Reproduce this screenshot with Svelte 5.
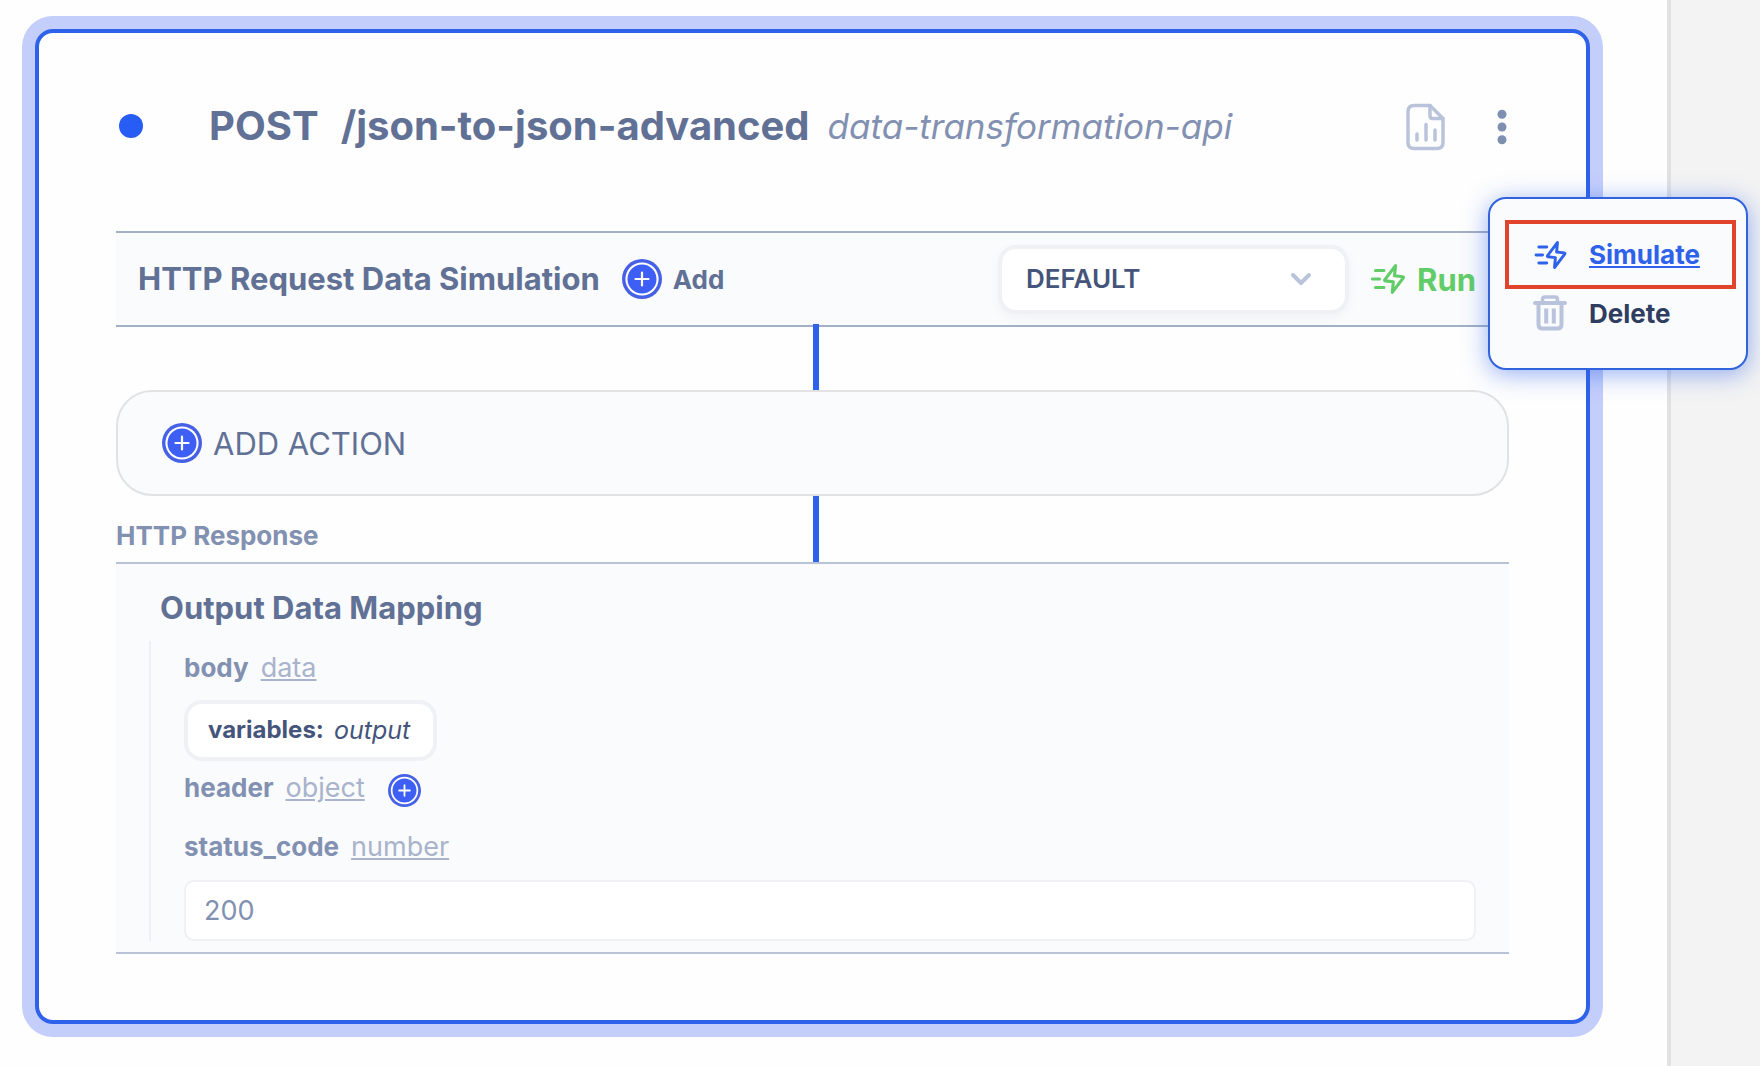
<script>
  let scenario = $state('DEFAULT');
  let statusCode = $state('200');
</script>

{#snippet plusIcon()}
  <svg class="plus" viewBox="0 0 40 40" aria-hidden="true">
    <circle cx="20" cy="20" r="20" fill="#4661e6" />
    <circle cx="20" cy="20" r="16.6" fill="#fff" />
    <circle cx="20" cy="20" r="14.5" fill="#3d5ff6" />
    <path d="M20 13.500v13M13.500 20h13" stroke="#fff" stroke-width="2.2" stroke-linecap="round" />
  </svg>
{/snippet}

{#snippet boltIcon()}
  <svg class="bolt" viewBox="0 0 34 30" fill="none" stroke="currentColor" stroke-width="3.1" stroke-linecap="round" stroke-linejoin="round" aria-hidden="true">
    <path d="M4.500 6.500h8.500M1.500 15h7M4.500 23.500h8.500" />
    <path d="M24.500 1.600 13.900 15.600q-.7 1.100.5 1.300l7.900.9L21.300 28.400 32.200 14q.7-1.100-.5-1.300l-8.200-.9z" />
  </svg>
{/snippet}

<div class="page">
  <main>
    <section class="card">
      <header>
        <span class="dot"></span>
        <h1><span>POST</span><span>/json-to-json-advanced</span></h1>
        <em class="api">data-transformation-api</em>
        <div class="tools">
          <button aria-label="Report">
            <svg width="40" height="48" viewBox="0 0 40 48" fill="none" stroke="#b9c3da" stroke-width="3.500" stroke-linecap="round" stroke-linejoin="round">
              <path d="M24 2.500H8Q2 2.500 2 8.500V39.500Q2 45.500 8 45.500H31Q37 45.500 37 39.500V15.500Z" />
              <path d="M24 2.500V13Q24 15.500 26.500 15.500H37M11 31v6M20 21.500V37M29 27v10" />
            </svg>
          </button>
          <button aria-label="More options" aria-expanded="true">
            <svg width="12" height="36" viewBox="0 0 12 36" fill="#7e8fb2">
              <circle cx="6" cy="5.300" r="4.500" /><circle cx="6" cy="18" r="4.500" /><circle cx="6" cy="30.700" r="4.500" />
            </svg>
          </button>
        </div>
      </header>

      <div class="band">
        <h2>HTTP Request Data Simulation</h2>
        <button class="add">{@render plusIcon()}Add</button>
        <div class="picker">
          <select aria-label="Simulation scenario" bind:value={scenario}>
            <option>DEFAULT</option>
          </select>
          <svg class="chevron" width="22" height="14" viewBox="0 0 22 14" fill="none" stroke="#b9c3dc" stroke-width="4" stroke-linecap="round" stroke-linejoin="round" aria-hidden="true"><path d="M3 3l8 8 8-8" /></svg>
        </div>
        <button class="run">{@render boltIcon()}Run</button>
      </div>

      <div class="connector first"></div>

      <button class="action">{@render plusIcon()}ADD ACTION</button>

      <div class="between">
        <h3>HTTP Response</h3>
        <div class="connector"></div>
      </div>

      <div class="mapping">
        <h2>Output Data Mapping</h2>
        <div class="tree">
          <div class="field"><b>body</b><a href="#data">data</a></div>
          <div class="chip"><b>variables:</b><em>output</em></div>
          <div class="field head"><b>header</b><a href="#object">object</a><button class="small" aria-label="Add header">{@render plusIcon()}</button></div>
          <div class="field status"><label for="status">status_code</label><a href="#number">number</a></div>
          <input id="status" type="text" bind:value={statusCode} />
        </div>
      </div>

      <div class="menu">
        <button class="simulate">{@render boltIcon()}<span>Simulate</span></button>
        <button class="delete">
          <svg width="34" height="36" viewBox="0 0 34 36" fill="none" stroke="#b9c3dc" stroke-width="4" stroke-linecap="round" stroke-linejoin="round" aria-hidden="true">
            <path d="M2 8h30M5.500 8.500v21q0 4 4 4h15q4 0 4-4v-21" />
            <path d="M9.500 7.500V4.500q0-2.500 2.500-2.500h10q2.500 0 2.500 2.500v3" stroke-width="3.500" />
            <path d="M13.200 13.500v15M20.800 13.500v15" stroke-linecap="butt" />
          </svg>
          <span>Delete</span>
        </button>
      </div>
    </section>
  </main>
  <aside></aside>
</div>

<style>
  :global(body) { margin: 0; background: #fefefe; }
  .page {
    display: flex;
    min-height: 100vh;
    overflow: hidden;
    font-family: Inter, "Liberation Sans", sans-serif;
    color: #617095;
  }
  .page, .page * { box-sizing: border-box; }
  main { flex: 1; padding: 29px 77px 42px 35px; }
  aside { width: 93px; border-left: 4px solid #e2e2e2; background: #f3f3f3; }
  button {
    display: flex;
    align-items: center;
    padding: 0;
    border: 0;
    background: none;
    font: inherit;
    color: inherit;
    cursor: pointer;
  }
  h1, h2, h3 { margin: 0; font-weight: 700; }
  .card {
    position: relative;
    padding: 0 77px 66px;
    border: 4px solid #2e62ea;
    border-radius: 18px;
    background: #fefefe;
    box-shadow: 0 0 0 13px #c4cefb;
  }
  header { display: flex; align-items: center; height: 198px; padding: 0 0 12px 3px; }
  .dot { width: 24px; height: 24px; border-radius: 50%; background: #285df5; }
  h1 { display: flex; gap: 22px; margin-left: 66px; font-size: 40px; line-height: 48px; }
  .api { margin-left: 18px; font-size: 35px; line-height: 48px; color: #8290b1; }
  .tools { display: flex; align-items: center; gap: 50px; margin-left: auto; padding: 2px 1px 0 0; }

  .band {
    display: flex;
    align-items: center;
    height: 96px;
    padding: 0 33px 0 22px;
    border-block: 2px solid #a3afc2;
    background: #fafbfd;
  }
  h2 { font-size: 31px; line-height: 40px; }
  .plus { width: 40px; height: 40px; }
  .add { gap: 11px; margin-left: 22px; font-size: 26px; font-weight: 700; }
  .picker { position: relative; width: 351px; margin-left: auto; }
  select {
    width: 100%;
    height: 69px;
    padding: 0 60px 0 24px;
    border: 4px solid #f0f1f5;
    border-radius: 18px;
    appearance: none;
    background: #fff;
    box-shadow: 0 4px 12px #0000000a;
    font: 600 26px/34px Inter, "Liberation Sans", sans-serif;
    color: #45547a;
  }
  .chevron { position: absolute; top: 27px; right: 37px; pointer-events: none; }
  .run { gap: 12px; margin-left: 22px; font-size: 31px; font-weight: 700; color: #62cd68; }
  .bolt { width: 34px; height: 30px; }

  .connector { width: 6px; height: 66px; margin: 0 auto; background: #2e62ea; transform: translateX(3px); }
  .first { position: relative; margin-top: -3px; }
  .action {
    gap: 11px;
    width: 100%;
    height: 106px;
    padding: 0 44px;
    border: 2px solid #e0e2e4;
    border-radius: 36px;
    background: #fafbfd;
    font-size: 31px;
  }
  .between { display: grid; grid-template-columns: 1fr auto 1fr; }
  h3 { padding-top: 23px; font-size: 26px; line-height: 34px; color: #8290b1; }

  .mapping {
    padding: 24px 33px 11px;
    border-block: 2px solid #b9c3d8;
    background: #fafbfd;
  }
  .mapping h2 { margin-left: 11px; }
  .tree { display: flex; flex-direction: column; margin-top: 13px; padding: 9px 0 0 33px; border-left: 2px solid #eff0f3; }
  .field { display: flex; align-items: center; gap: 12px; height: 34px; font-size: 26px; color: #8290b1; }
  .field b, .field label, .chip b { font-weight: 700; }
  .field a { font-size: 27px; color: #a9b3cb; text-decoration: underline; }
  .chip {
    display: flex;
    align-items: center;
    align-self: flex-start;
    gap: 10px;
    height: 61px;
    margin-top: 16px;
    padding: 0 23px 2px 20px;
    border: 4px solid #f0f1f5;
    border-radius: 18px;
    background: #fff;
    font-size: 24px;
    color: #45547a;
  }
  .chip em { font-size: 25px; }
  .head { margin-top: 9px; }
  .status { margin-top: 25px; }
  .small { margin-left: 11px; padding-top: 6px; }
  .small .plus { width: 33px; height: 33px; }
  input {
    width: 100%;
    height: 61px;
    margin-top: 17px;
    padding: 0 18px;
    border: 2px solid #f0f1f4;
    border-radius: 10px;
    background: #fff;
    font: 400 27px/34px Inter, "Liberation Sans", sans-serif;
    color: #8290b1;
  }

  .menu {
    position: absolute;
    top: 164px;
    right: -162px;
    width: 260px;
    height: 173px;
    padding: 21px 10px 0 15px;
    border: 2px solid #3163df;
    border-radius: 18px;
    background: #fafbfd;
    box-shadow: 0 4px 24px #2e62ea80;
    font-size: 26px;
    font-weight: 700;
  }
  .menu button { width: 100%; gap: 22px; }
  .menu .simulate { height: 69px; padding-left: 25px; border: 4px solid #e0442a; color: #2e62ea; text-decoration: underline; }
  .menu .delete { height: 48px; padding-left: 28px; color: #2f3d60; }
  .menu .bolt { width: 33px; height: 28px; }
</style>
